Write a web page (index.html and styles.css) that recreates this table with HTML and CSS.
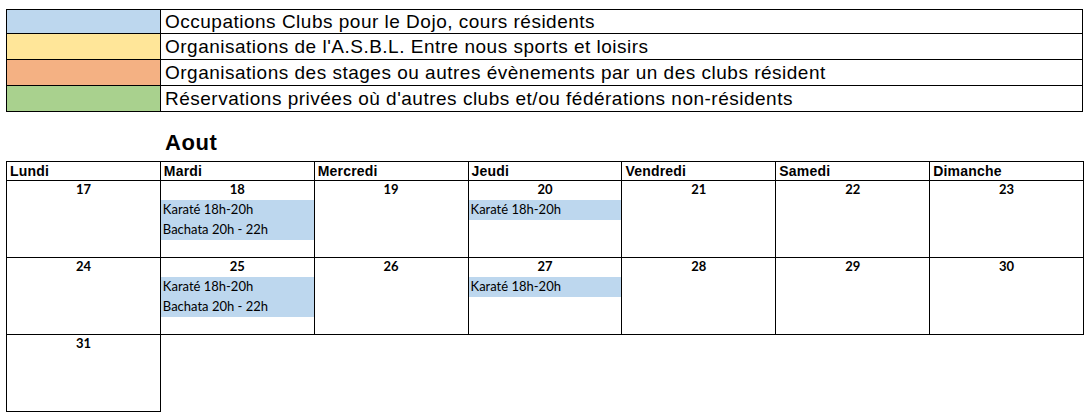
FILE: index.html
```html
<!DOCTYPE html>
<html lang="fr">
<head>
<meta charset="utf-8">
<title>Aout</title>
<link rel="stylesheet" href="styles.css">
</head>
<body>
<div class="page">
  <table class="legend">
    <tr class="r1"><td class="swatch blue"></td><td class="label">Occupations Clubs pour le Dojo, cours résidents</td></tr>
    <tr><td class="swatch yellow"></td><td class="label">Organisations de l'A.S.B.L. Entre nous sports et loisirs</td></tr>
    <tr><td class="swatch orange"></td><td class="label">Organisations des stages ou autres évènements par un des clubs résident</td></tr>
    <tr><td class="swatch green"></td><td class="label">Réservations privées où d'autres clubs et/ou fédérations non-résidents</td></tr>
  </table>

  <div class="title">Aout</div>

  <div class="calendar">
    <div class="head">Lundi</div>
    <div class="head">Mardi</div>
    <div class="head">Mercredi</div>
    <div class="head">Jeudi</div>
    <div class="head">Vendredi</div>
    <div class="head">Samedi</div>
    <div class="head">Dimanche</div>

    <div class="day"><div class="num">17</div></div>
    <div class="day"><div class="num">18</div><div class="ev">Karaté 18h-20h</div><div class="ev">Bachata 20h - 22h</div></div>
    <div class="day"><div class="num">19</div></div>
    <div class="day"><div class="num">20</div><div class="ev">Karaté 18h-20h</div></div>
    <div class="day"><div class="num">21</div></div>
    <div class="day"><div class="num">22</div></div>
    <div class="day"><div class="num">23</div></div>

    <div class="day"><div class="num">24</div></div>
    <div class="day"><div class="num">25</div><div class="ev">Karaté 18h-20h</div><div class="ev">Bachata 20h - 22h</div></div>
    <div class="day"><div class="num">26</div></div>
    <div class="day"><div class="num">27</div><div class="ev">Karaté 18h-20h</div></div>
    <div class="day"><div class="num">28</div></div>
    <div class="day"><div class="num">29</div></div>
    <div class="day"><div class="num">30</div></div>

    <div class="day"><div class="num">31</div></div>
  </div>
</div>
</body>
</html>
```

FILE: styles.css
```css
html, body {
  margin: 0;
  padding: 0;
  background: #ffffff;
  color: #000000;
}

.page {
  padding: 9px 0 0 6px;
}

.legend {
  border-collapse: collapse;
  width: 1077px;
  font-family: "Liberation Sans", Arial, sans-serif;
  font-size: 19px;
  letter-spacing: 0.5px;
}

.legend td {
  border: 1px solid #000;
  padding: 0;
  height: 25px;
}

.legend tr.r1 td {
  height: 23px;
}

.legend .swatch {
  width: 153px;
}

.legend .label {
  padding-left: 4px;
  line-height: 20px;
}

.blue { background: #bdd7ee; }
.yellow { background: #ffe699; }
.orange { background: #f4b183; }
.green { background: #a9d18e; }

.title {
  height: 30px;
  padding: 19px 0 0 159px;
  font-family: "Liberation Sans", Arial, sans-serif;
  font-weight: bold;
  font-size: 22px;
  letter-spacing: 0.6px;
  line-height: 24px;
}

.calendar {
  display: grid;
  grid-template-columns: repeat(7, 1fr);
  width: 1077px;
  border-left: 1px solid #000;
  border-top: 1px solid #000;
}

.head {
  border-right: 1px solid #000;
  border-bottom: 1px solid #000;
  height: 18px;
  padding-left: 3px;
  font-family: "Liberation Sans", Arial, sans-serif;
  font-weight: bold;
  font-size: 14px;
  letter-spacing: 0.2px;
  line-height: 18px;
}

.day {
  border-right: 1px solid #000;
  border-bottom: 1px solid #000;
  height: 76px;
  font-family: Lato, "Open Sans", sans-serif;
  font-size: 13px;
}

.num {
  text-align: center;
  font-weight: bold;
  height: 19px;
  line-height: 17px;
}

.ev {
  background: #bdd7ee;
  height: 20px;
  line-height: 19px;
  padding-left: 2px;
  white-space: nowrap;
}
```
